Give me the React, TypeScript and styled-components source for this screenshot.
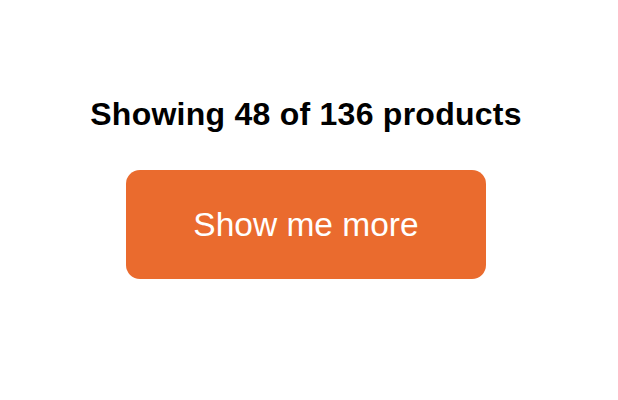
import styled, { createGlobalStyle } from "styled-components";

const GlobalStyle = createGlobalStyle`
  html, body {
    margin: 0;
    padding: 0;
    background: #ffffff;
  }
  body {
    font-family: "Liberation Sans", Arial, sans-serif;
  }
`;

const Page = styled.main`
  width: 612px;
  height: 400px;
  display: flex;
  flex-direction: column;
  align-items: center;
  padding-top: 94px;
  box-sizing: border-box;
`;

const Title = styled.h2`
  margin: 0;
  font-size: 32px;
  line-height: 40px;
  font-weight: 700;
  color: #000000;
  letter-spacing: 0.25px;
`;

const MoreButton = styled.button`
  margin-top: 36px;
  width: 360px;
  height: 109px;
  border: none;
  border-radius: 14px;
  background: #ea6b2e;
  color: #ffffff;
  font-family: "Liberation Sans", Arial, sans-serif;
  font-size: 33.5px;
  font-weight: 400;
  cursor: pointer;
  display: flex;
  align-items: center;
  justify-content: center;
  padding: 0;
`;

export default function App() {
  return (
    <>
      <GlobalStyle />
      <Page>
        <Title>Showing 48 of 136 products</Title>
        <MoreButton>Show me more</MoreButton>
      </Page>
    </>
  );
}
